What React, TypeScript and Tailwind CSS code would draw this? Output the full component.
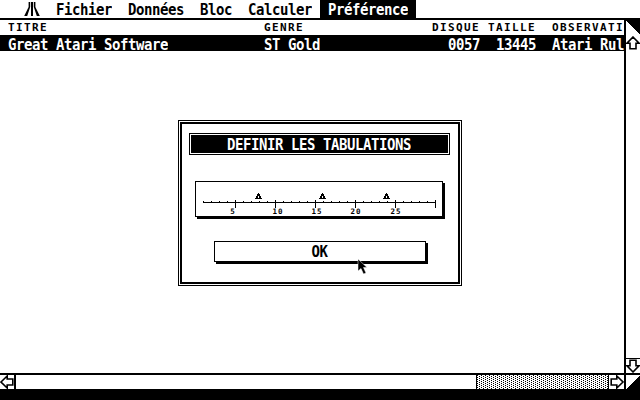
import React from "react";

const mono = "font-['DejaVu_Sans_Mono',monospace]";

const menus = ["Fichier", "Données", "Bloc", "Calculer"];

// system font is tall and narrow, so stretch the mono font a bit
const T = ({ children }: { children: React.ReactNode }) => (
  <span className="inline-block scale-y-[1.15]">{children}</span>
);

const ArrowIcon = ({ rotate }: { rotate: string }) => (
  <svg width="14" height="14" viewBox="0 0 14 14" className={rotate}>
    <path d="M7 1 L13 7.2 L10 7.2 L10 12.8 L4 12.8 L4 7.2 L1 7.2 Z" fill="white" stroke="black" strokeWidth="1.6" />
  </svg>
);

const AtariLogo = () => (
  <svg width="16" height="14" viewBox="0 0 16 14" fill="black">
    <path d="M7 0h2v14H7z M4.6 0h1.6v5L3.2 14H0.2L4.6 5z M9.8 0h1.6v5l4.4 9h-3L9.8 5z" />
  </svg>
);

const Ruler = () => {
  const ticks = Array.from({ length: 30 }, (_, i) => i);
  const labels = [
    { n: 5, x: 37 },
    { n: 10, x: 82 },
    { n: 15, x: 121 },
    { n: 20, x: 160 },
    { n: 25, x: 200 },
  ];
  return (
    <svg width="246" height="34" viewBox="0 0 246 34" shapeRendering="crispEdges">
      <rect x="7" y="20" width="233" height="1" fill="black" />
      {ticks.map((i) => (
        <rect key={i} x={7 + i * 8} y={i % 5 === 4 ? 18 : 19} width="1" height={i % 5 === 4 ? 8 : 2} fill="black" />
      ))}
      {[59, 123, 187].map((x) => (
        <path key={x} d={`M${x + 3} 11h1v1h1v2h1v2h1v1H${x}v-1h1v-2h1v-2h1z M${x + 3} 14v2h1v-2z`} fill="black" fillRule="evenodd" />
      ))}
      {labels.map((l) => (
        <text key={l.n} x={l.x} y="32" textAnchor="middle" fontSize="7.5" fontFamily="'DejaVu Sans Mono',monospace" fontWeight="700" letterSpacing="1" fill="black">
          {l.n}
        </text>
      ))}
    </svg>
  );
};

const Dots = () => (
  <svg width="131" height="14" shapeRendering="crispEdges">
    <defs>
      <pattern id="dots" width="4" height="2" patternUnits="userSpaceOnUse">
        <rect x="0" y="0" width="1" height="1" fill="black" />
        <rect x="2" y="1" width="1" height="1" fill="black" />
      </pattern>
    </defs>
    <rect width="131" height="14" fill="url(#dots)" />
  </svg>
);

export default function App() {
  return (
    <div className={`${mono} flex h-[400px] w-[640px] flex-col overflow-hidden bg-white text-black`}>
      {/* menu bar */}
      <div className="flex h-[18px] shrink-0 pl-4 text-[14px] font-bold leading-[18px] tracking-[-0.43px]">
        <div className="flex w-8 items-center justify-center">
          <AtariLogo />
        </div>
        {menus.map((m) => (
          <div key={m} className="px-2">
            <T>{m}</T>
          </div>
        ))}
        <div className="bg-black px-2 text-white">
          <T>Préférence</T>
        </div>
      </div>

      <div className="flex h-[357px] shrink-0 border-y-2 border-black">
        {/* list */}
        <div className="relative w-[624px] shrink-0 overflow-hidden">
          <div className="flex h-[15px] whitespace-nowrap text-[11px] font-bold leading-[15px] tracking-[1.38px]">
            <div className="w-[264px] pl-2">TITRE</div>
            <div className="w-[168px]">GENRE</div>
            <div className="w-14">DISQUE</div>
            <div className="w-16">TAILLE</div>
            <div>OBSERVATI</div>
          </div>
          <div className="flex h-4 whitespace-nowrap bg-black text-[14px] font-bold leading-[18px] tracking-[-0.43px] text-white">
            <div className="w-[264px] pl-2">
              <T>Great Atari Software</T>
            </div>
            <div className="w-[168px]">
              <T>ST Gold</T>
            </div>
            <div className="w-14 pl-4">
              <T>0057</T>
            </div>
            <div className="w-16 pl-2">
              <T>13445</T>
            </div>
            <div>
              <T>Atari Rul</T>
            </div>
          </div>

          {/* dialog */}
          <div className="absolute left-[178px] top-[100px] flex h-[166px] w-[284px] border border-black p-px">
            <div className="flex flex-1 flex-col items-center border-2 border-black pt-[9px]">
              <div className="mr-[2px] w-[261px] border border-black p-px">
                <div className="h-[18px] bg-black text-center text-[14px] font-bold leading-[18px] tracking-[-0.43px] text-white">
                  <T>DEFINIR LES TABULATIONS</T>
                </div>
              </div>
              <div className="mr-[2px] mt-[26px] h-[36px] w-[248px] border border-black shadow-[2px_2px_0_0_#000]">
                <Ruler />
              </div>
              <div className="mr-px mt-[24px] h-[21px] w-[212px] border border-black text-center text-[14px] font-bold leading-[19px] tracking-[-0.43px] shadow-[2px_2px_0_0_#000]">
                <T>OK</T>
              </div>
            </div>
          </div>

          {/* mouse pointer */}
          <svg className="absolute left-[357px] top-[238px]" width="12" height="17" viewBox="0 0 12 17">
            <path d="M1 1 L1 13 L4 10.5 L6.5 16 L9 15 L6.5 9.5 L10 9.5 Z" fill="black" stroke="white" strokeWidth="0.5" />
          </svg>
        </div>

        {/* vertical scrollbar */}
        <div className="flex w-4 shrink-0 flex-col border-l-2 border-black">
          <svg width="14" height="15" viewBox="0 0 14 15" shapeRendering="crispEdges">
            <path d="M0 0 L14 0 L14 15 Z" fill="black" />
          </svg>
          <div className="flex h-4 items-center justify-center">
            <ArrowIcon rotate="" />
          </div>
          <div className="flex-1" />
          <div className="flex h-[15px] items-center justify-center border-t border-black">
            <ArrowIcon rotate="rotate-180" />
          </div>
        </div>
      </div>

      {/* horizontal scrollbar */}
      <div className="flex h-[14px] shrink-0">
        <div className="flex w-4 shrink-0 items-center justify-center border-r-2 border-black">
          <ArrowIcon rotate="-rotate-90" />
        </div>
        <div className="w-[461px] shrink-0 border-r border-black" />
        <div className="w-[131px] shrink-0">
          <Dots />
        </div>
        <div className="flex w-4 shrink-0 items-center justify-center border-l border-black">
          <ArrowIcon rotate="rotate-90" />
        </div>
        <div className="flex w-4 shrink-0 border-l-2 border-black">
          <svg width="14" height="14" viewBox="0 0 14 14" shapeRendering="crispEdges">
            <path d="M14 0 L14 14 L0 14 Z" fill="black" />
          </svg>
        </div>
      </div>
      <div className="flex-1 bg-black" />
    </div>
  );
}
